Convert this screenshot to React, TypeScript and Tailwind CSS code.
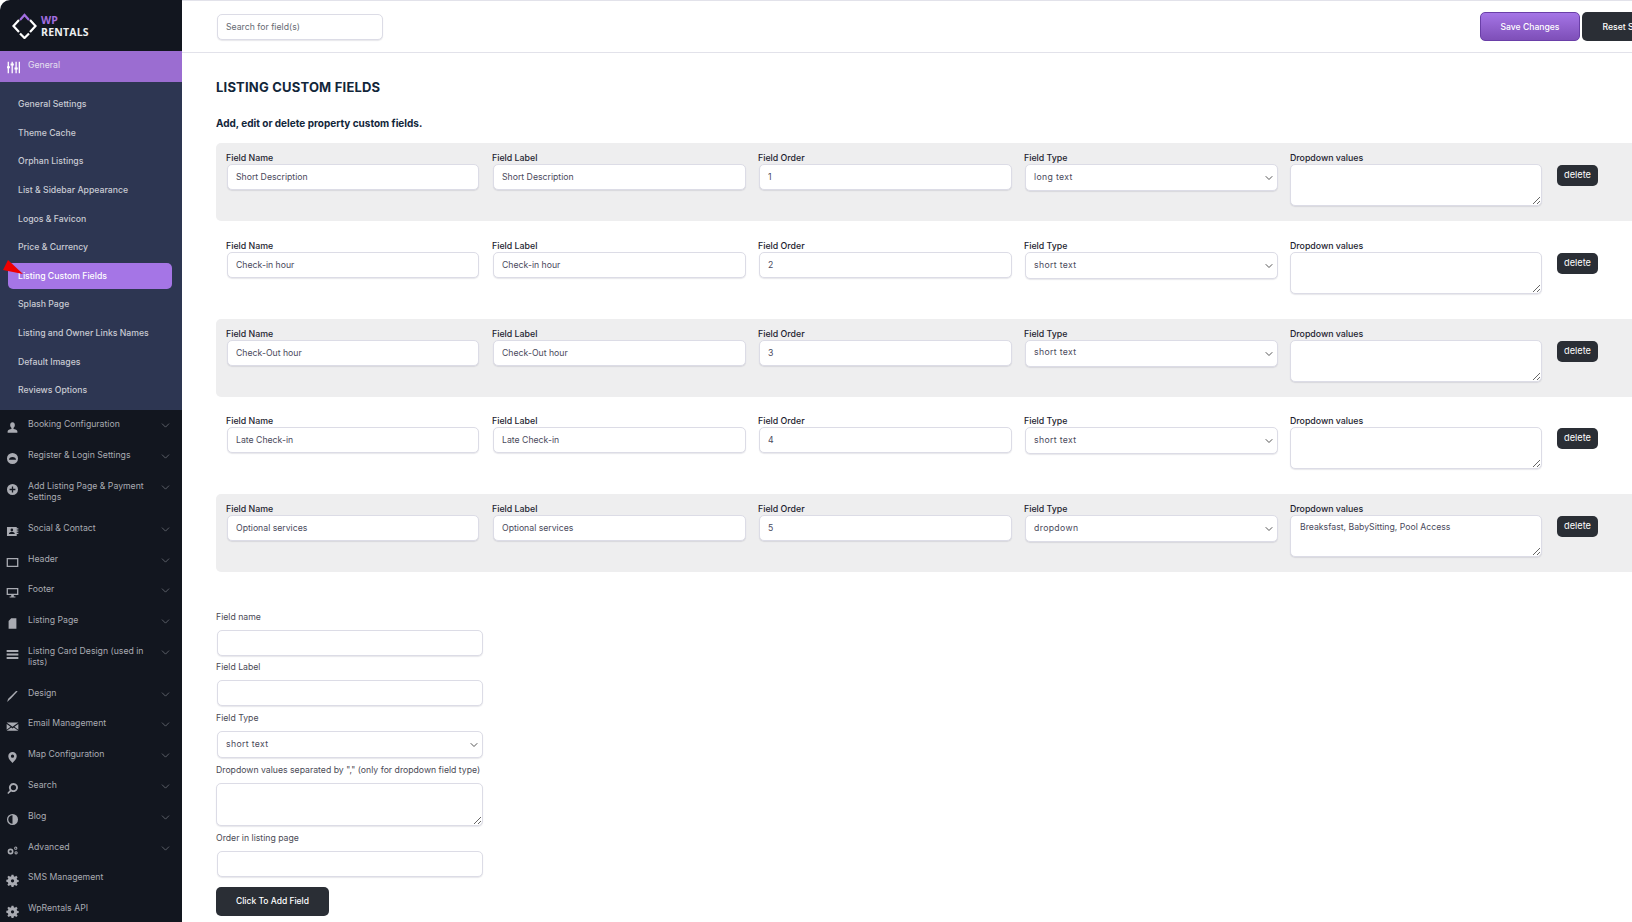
import { ChevronDown } from 'lucide-react';
import { ReactNode } from 'react';

const font = "font-['Inter',sans-serif]";

function Glyph({ children }: { children: ReactNode }) {
	return (
		<svg viewBox="0 0 20 20" className="block w-[13px] h-[13px] shrink-0 fill-[#a9abb2]">
			{children}
		</svg>
	);
}

const Gear = (
	<path d="M8.5 1h3l.5 2.6 1.6.7 2.2-1.5 2.1 2.1-1.5 2.2.7 1.6 2.4.5v3l-2.4.5-.7 1.6 1.5 2.2-2.1 2.1-2.2-1.5-1.6.7-.5 2.2h-3L8 17.800l-1.6-.7-2.2 1.5-2.1-2.1 1.5-2.2-.7-1.6L.5 12V9l2.4-.5.7-1.6-1.5-2.2 2.1-2.1 2.2 1.500L8 3.600z M10 8a2.500 2.500 0 1 0 0 5 2.500 2.500 0 0 0 0-5z" fillRule="evenodd" />
);

const navItems: { label: string; icon: ReactNode; chevron?: boolean }[] = [
	{
		label: 'Booking Configuration',
		icon: <path d="M10 2c2.300 0 3.600 1.800 3.600 4.200 0 2-.9 3.500-2 4.400v1.600c2.800.6 5.900 1.700 5.900 3.400V18h-15v-2.400c0-1.700 3.100-2.800 5.900-3.400v-1.600c-1.100-.9-2-2.400-2-4.400C6.400 3.800 7.700 2 10 2z" />,
		chevron: true,
	},
	{
		label: 'Register & Login Settings',
		icon: <path d="M10 1.500a8.500 8.500 0 1 0 0 17 8.500 8.500 0 0 0 0-17zM4.500 12c0-2.600 2.500-4.500 5.500-4.500s5.500 1.900 5.500 4.500z" fillRule="evenodd" />,
		chevron: true,
	},
	{
		label: 'Add Listing Page & Payment Settings',
		icon: <path d="M10 1.500a8.500 8.500 0 1 0 0 17 8.500 8.500 0 0 0 0-17zM9 5.500h2V9h3.500v2H11v3.500H9V11H5.500V9H9z" fillRule="evenodd" />,
		chevron: true,
	},
	{
		label: 'Social & Contact',
		icon: <path d="M1.500 3h15v2H19v2h-2.500v1.500H19v2h-2.500V12H19v2h-2.500v3h-15zM9 5.500a2 2 0 1 0 0 4 2 2 0 0 0 0-4zM4.500 14h9c0-2-2-3.500-4.500-3.500S4.500 12 4.500 14z" fillRule="evenodd" />,
		chevron: true,
	},
	{
		label: 'Header',
		icon: <path d="M1 3h18v14H1zM3 5v10h14V5z" fillRule="evenodd" />,
		chevron: true,
	},
	{
		label: 'Footer',
		icon: <path d="M1 3h18v11h-7v2h2.500v1.500h-9V16H8v-2H1zM3 5v7h14V5z" fillRule="evenodd" />,
		chevron: true,
	},
	{
		label: 'Listing Page',
		icon: <path d="M8 2h8v16H4V6z" />,
		chevron: true,
	},
	{
		label: 'Listing Card Design (used in lists)',
		icon: <path d="M1 3h18v3H1zM1 8.500h18v3H1zM1 14h18v3H1z" />,
		chevron: true,
	},
	{
		label: 'Design',
		icon: <path d="M18 2 8 12.500 5 15.500 2 18.500c.2-2 .6-3.600 1.500-5L15.500 1.500z" />,
		chevron: true,
	},
	{
		label: 'Email Management',
		icon: <path d="M1 4h18L10 10.500zM1 6l6 4.500L1 15zM19 6l-6 4.500 6 4.500zM8 11.500l2 1.500 2-1.500 7 5H1z" />,
		chevron: true,
	},
	{
		label: 'Map Configuration',
		icon: <path d="M10 1.500a6.500 6.500 0 0 0-6.500 6.500c0 4 4 7.500 6.500 10.500 2.500-3 6.500-6.500 6.500-10.500A6.500 6.500 0 0 0 10 1.500zm0 4a2.500 2.500 0 1 1 0 5 2.500 2.500 0 0 1 0-5z" fillRule="evenodd" />,
		chevron: true,
	},
	{
		label: 'Search',
		icon: <path d="M11.500 1.500a7 7 0 0 0-5.700 11L2 17l1.500 1.500 4.300-4a7 7 0 1 0 3.700-13zm0 3a4 4 0 1 1 0 8 4 4 0 0 1 0-8z" fillRule="evenodd" />,
		chevron: true,
	},
	{
		label: 'Blog',
		icon: <path d="M10 1.500a8.500 8.500 0 1 0 0 17 8.500 8.500 0 0 0 0-17zM10 3.500v13a6.500 6.500 0 0 1 0-13z" fillRule="evenodd" />,
		chevron: true,
	},
	{
		label: 'Advanced',
		icon: <path d="M7 7a4.500 4.500 0 1 0 0 9 4.500 4.500 0 0 0 0-9zm0 2.500a2 2 0 1 1 0 4 2 2 0 0 1 0-4zM15 4a2.500 2.500 0 1 0 0 5 2.500 2.500 0 0 0 0-5zm0 1.500a1 1 0 1 1 0 2 1 1 0 0 1 0-2zM15.500 11a2.500 2.500 0 1 0 0 5 2.500 2.500 0 0 0 0-5zm0 1.500a1 1 0 1 1 0 2 1 1 0 0 1 0-2z" fillRule="evenodd" />,
		chevron: true,
	},
	{ label: 'SMS Management', icon: Gear },
	{ label: 'WpRentals API', icon: Gear },
];

const subItems = [
	'General Settings',
	'Theme Cache',
	'Orphan Listings',
	'List & Sidebar Appearance',
	'Logos & Favicon',
	'Price & Currency',
	'Listing Custom Fields',
	'Splash Page',
	'Listing and Owner Links Names',
	'Default Images',
	'Reviews Options',
];

const rows = [
	{ name: 'Short Description', order: '1', type: 'long text', values: '' },
	{ name: 'Check-in hour', order: '2', type: 'short text', values: '' },
	{ name: 'Check-Out hour', order: '3', type: 'short text', values: '' },
	{ name: 'Late Check-in', order: '4', type: 'short text', values: '' },
	{ name: 'Optional services', order: '5', type: 'dropdown', values: 'Breaksfast, BabySitting, Pool Access' },
];

const fieldClass =
	'block bg-white border border-[#dcdce6] rounded-[5px] shadow-[0_1px_1px_rgba(60,60,90,0.12)] text-[8.7px] text-[#4a4a5c] outline-none';

function TextField({ value = '', className = '' }: { value?: string; className?: string }) {
	return <input readOnly value={value} className={`${fieldClass} h-[26px] px-[8px] ${className}`} />;
}

function SelectField({ value, className = '' }: { value: string; className?: string }) {
	return (
		<div className={`relative ${className}`}>
			<select
				value={value}
				onChange={() => {}}
				className={`${fieldClass} appearance-none w-full h-[27px] px-[8px] tracking-[0.35px]`}
			>
				<option>long text</option>
				<option>short text</option>
				<option>dropdown</option>
			</select>
			<ChevronDown className="absolute right-[3px] top-[8px] w-[12px] h-[12px] text-[#555]" />
		</div>
	);
}

function Sidebar() {
	return (
		<aside className="relative w-[182px] h-full shrink-0 bg-[#12161f] rounded-tl-[10px] overflow-hidden">
			<div className="h-[51px] pl-[12px] flex items-center gap-[3px]">
				<svg viewBox="0 0 26 26" className="w-[26px] h-[26px] fill-none">
					<path d="M8 7 12.500 2 17 7" stroke="#a26ee0" strokeWidth="2.200" />
					<path d="M7 7 1.500 13 7 19M18 7l5.500 6-5.500 6M8 20.500l4.500 4.500 4.500-4.500" stroke="#fff" strokeWidth="2.200" />
				</svg>
				<div className="font-bold text-[10.5px] leading-[12px] font-['Open_Sans',sans-serif]">
					<div className="text-[#a26ee0]">WP</div>
					<div className="text-[#eceef0] tracking-[0.2px]">RENTALS</div>
				</div>
			</div>
			<div className="h-[31px] bg-[#9b6dd1] flex items-center pl-[7px] gap-[8px] text-[8.7px] text-[#e6e0f0]">
				<svg viewBox="0 0 20 20" className="w-[13px] h-[13px] mt-[2px] fill-white">
					<path d="M1 1h2v7h1.500v3H3v8H1v-8H0V8h1zM7 1h2v3h1.500v3H9v12H7V7H5.500V4H7zM13 1h2v9h1.500v3H15v6h-2v-6h-1.500v-3H13zM18 1h2v3h0v3h0v12h-2V7h0V4h0z" />
				</svg>
				<span className="mt-[-1px]">General</span>
			</div>
			<div className="h-[328px] bg-[#2d3652] pt-[8.5px] pl-[8px] pr-[10px] text-[8.7px] font-medium">
				{subItems.map((item) =>
					item === 'Listing Custom Fields' ? (
						<div key={item} className="h-[26px] my-[1.3px] flex items-center pl-[10px] bg-[#a575e6] text-white rounded-[5px]">
							{item}
						</div>
					) : (
						<div key={item} className="h-[28.6px] flex items-center pl-[10px] text-[#c9cbd2]">
							{item}
						</div>
					),
				)}
			</div>
			<nav className="text-[8.7px] leading-[11.5px] text-[#a9abb2]">
				{navItems.map((item) => (
					<div key={item.label} className="flex items-start pl-[6px] pr-[10px] py-[9.4px]">
						<span className="w-[22px] h-[12px] shrink-0 flex">
							<span className="mt-[2px]">
								<Glyph>{item.icon}</Glyph>
							</span>
						</span>
						<span className="flex-1 pr-[10px]">{item.label}</span>
						{item.chevron && (
							<span className="w-[13px] h-[12px] shrink-0">
								<ChevronDown strokeWidth={1.25} className="w-[13px] h-[13px] text-[#7d8088]" />
							</span>
						)}
					</div>
				))}
			</nav>
			{/* red marker drawn over the menu in the screenshot */}
			<svg viewBox="0 0 20 14" className="absolute left-[3px] top-[260px] w-[20px] h-[14px] fill-[#f00000]">
				<path d="M5 0 0 10l20 4z" />
			</svg>
		</aside>
	);
}

function FieldRow({ row, shaded }: { row: (typeof rows)[number]; shaded: boolean }) {
	const label = 'text-[8.8px] leading-[12px] font-medium text-[#23232f]';
	return (
		<div className={`h-[78px] flex rounded-l-[5px] pl-[10px] pt-[9px] ${shaded ? 'bg-[#eeeeef]' : ''}`}>
			<div className="w-[266px]">
				<div className={label}>Field Name</div>
				<TextField value={row.name} className="w-[252px] ml-px" />
			</div>
			<div className="w-[266px]">
				<div className={label}>Field Label</div>
				<TextField value={row.name} className="w-[253px] ml-px" />
			</div>
			<div className="w-[266px]">
				<div className={label}>Field Order</div>
				<TextField value={row.order} className="w-[253px] ml-px" />
			</div>
			<div className="w-[266px]">
				<div className={label}>Field Type</div>
				<SelectField value={row.type} className="w-[253px] ml-px" />
			</div>
			<div className="w-[267px]">
				<div className={label}>Dropdown values</div>
				<textarea
					readOnly
					value={row.values}
					className={`${fieldClass} w-[252px] h-[42px] px-[9px] py-[5px] leading-[12px]`}
				/>
			</div>
			<div className="pt-[13px] flex items-start">
				<button className="w-[41px] h-[21px] rounded-[5px] bg-[#2a2e35] text-white text-[9.2px] leading-[18px] pb-[1px]">
					delete
				</button>
			</div>
		</div>
	);
}

function AddFieldForm() {
	const label = 'text-[8.7px] leading-[12px] text-[#4a4a55]';
	return (
		<div className="w-[270px] mt-[39px] flex flex-col">
			<div className={label}>Field name</div>
			<TextField className="w-[266px] ml-px mt-[7px] mb-[5px]" />
			<div className={label}>Field Label</div>
			<TextField className="w-[266px] ml-px mt-[7px] mb-[6px]" />
			<div className={label}>Field Type</div>
			<SelectField value="short text" className="w-[266px] ml-px mt-[7px] mb-[6px]" />
			<div className={label}>Dropdown values separated by "," (only for dropdown field type)</div>
			<textarea readOnly className={`${fieldClass} w-[267px] h-[43px] mt-[7px] mb-[6px]`} />
			<div className={label}>Order in listing page</div>
			<TextField className="w-[266px] ml-px mt-[7px] mb-[10px]" />
			<button className="w-[113px] h-[29px] rounded-[5px] bg-[#2a2e35] text-white text-[8.5px] font-medium">
				Click To Add Field
			</button>
		</div>
	);
}

export default function App() {
	return (
		<div className={`${font} w-[1632px] h-[922px] flex overflow-hidden bg-white`}>
			<Sidebar />
			<main className="flex-1 min-w-0 border-t border-[#e2e2ea]">
				<header className="h-[52px] border-b border-[#e2e2ea] flex items-center pl-[35px] pr-0">
					<input
						readOnly
						placeholder="Search for field(s)"
						className={`${fieldClass} w-[166px] h-[26px] px-[8px] placeholder:text-[#666a72]`}
					/>
					<div className="ml-auto flex gap-[2px] mr-[-50px]">
						<button className="w-[100px] h-[29px] pt-[2px] rounded-[5px] border border-[#6a3fa8] bg-gradient-to-b from-[#a575e6] to-[#7e4fb8] text-white text-[8.6px] font-medium">
							Save Changes
						</button>
						<button className="w-[100px] h-[29px] pt-[2px] rounded-[5px] bg-[#2a2e35] text-white text-[8.6px] font-medium">
							Reset Settings
						</button>
					</div>
				</header>
				<section className="pl-[34px]">
					<h1 className="mt-[25px] text-[13px] leading-[18px] font-bold text-[#12263a] tracking-[0.2px]">
						LISTING CUSTOM FIELDS
					</h1>
					<p className="mt-[20px] mb-[13px] text-[10px] leading-[14px] font-bold text-[#12263a]">
						Add, edit or delete property custom fields.
					</p>
					<div className="flex flex-col gap-[9.75px]">
						{rows.map((row, i) => (
							<FieldRow key={row.order} row={row} shaded={i % 2 === 0} />
						))}
					</div>
					<AddFieldForm />
				</section>
			</main>
		</div>
	);
}
